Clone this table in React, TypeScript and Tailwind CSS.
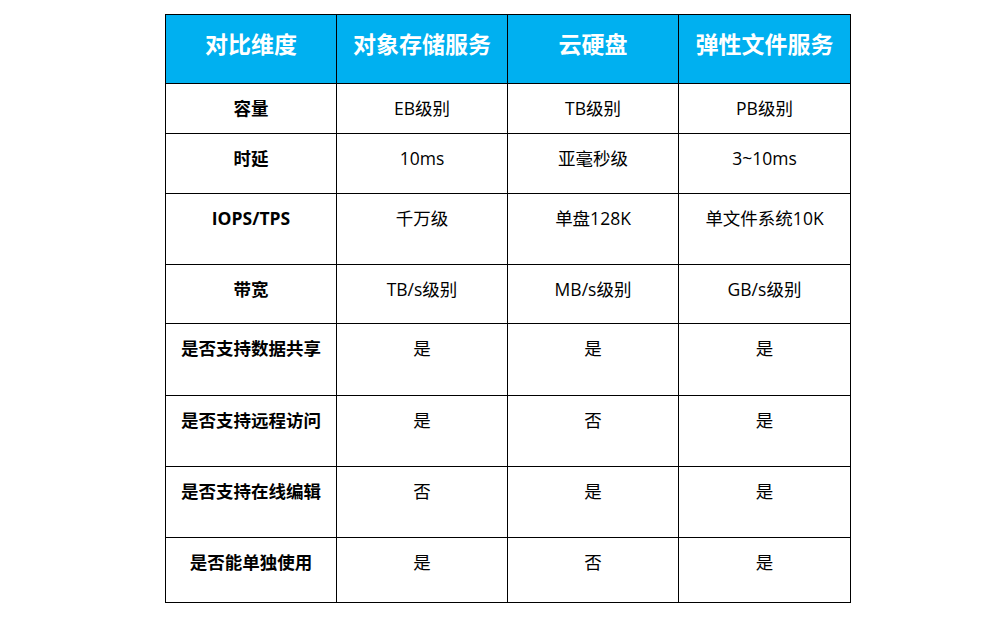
const FONT = '[font-family:"Open_Sans","Noto_Sans_CJK_SC",sans-serif]';

const headers = ['对比维度', '对象存储服务', '云硬盘', '弹性文件服务'];

const rows: { h: string; cells: string[] }[] = [
  { h: 'h-[50px]', cells: ['容量', 'EB级别', 'TB级别', 'PB级别'] },
  { h: 'h-[60px]', cells: ['时延', '10ms', '亚毫秒级', '3~10ms'] },
  { h: 'h-[71px]', cells: ['IOPS/TPS', '千万级', '单盘128K', '单文件系统10K'] },
  { h: 'h-[59px]', cells: ['带宽', 'TB/s级别', 'MB/s级别', 'GB/s级别'] },
  { h: 'h-[72px]', cells: ['是否支持数据共享', '是', '是', '是'] },
  { h: 'h-[71px]', cells: ['是否支持远程访问', '是', '否', '是'] },
  { h: 'h-[71px]', cells: ['是否支持在线编辑', '否', '是', '是'] },
  { h: 'h-[65px]', cells: ['是否能单独使用', '是', '否', '是'] },
];

export default function App() {
  return (
    <div className={`w-[998px] h-[626px] bg-white ${FONT}`}>
      <div className="ml-[165px] pt-[14px]">
        <div className="w-[686px] border-l border-t border-black grid grid-cols-[171px_171px_171px_172px]">
          {headers.map((t) => (
            <div
              key={t}
              className="h-[69px] border-r border-b border-black bg-[#00b0f0] text-white text-[23px] font-bold leading-[34px] text-center pt-[12px]"
            >
              {t}
            </div>
          ))}
          {rows.map((r) =>
            r.cells.map((c, i) => (
              <div
                key={r.cells[0] + i}
                className={`${r.h} border-r border-b border-black text-black text-[17.5px] leading-[26px] text-center pt-[11px] ${
                  i === 0 ? 'font-bold' : 'font-normal'
                }`}
              >
                {c}
              </div>
            ))
          )}
        </div>
      </div>
    </div>
  );
}
